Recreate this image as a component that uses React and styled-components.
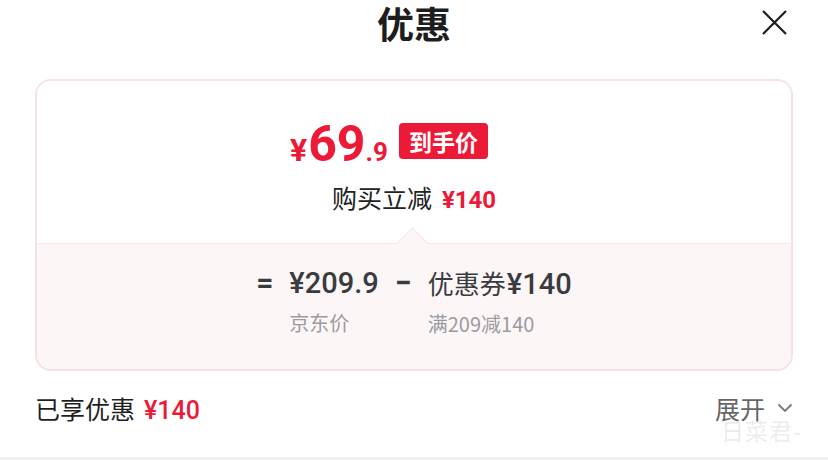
import styled, { createGlobalStyle } from 'styled-components';

const GlobalStyle = createGlobalStyle`
  html, body {
    margin: 0;
    padding: 0;
    background: #fff;
  }
  body {
    font-family: Roboto, "Noto Sans", "Noto Sans CJK SC", sans-serif;
  }
`;

const RED = '#ec1a37';
const CJK = '"Noto Sans CJK SC", sans-serif';
const NUM = 'Roboto, "Noto Sans CJK SC", sans-serif';

const Sheet = styled.div`
  position: relative;
  width: 828px;
  height: 460px;
  overflow: hidden;
  background: #fff;
  border-bottom: 3px solid #f0f0f0;
  box-sizing: border-box;
`;

const Header = styled.div`
  position: relative;
  display: flex;
  justify-content: center;
  align-items: center;
  height: 46px;
`;

const Title = styled.h1`
  margin: 0;
  font-family: ${CJK};
  font-size: 37px;
  font-weight: 700;
  color: #1d1d1d;
  line-height: 1.2;
`;

const Close = styled.button`
  position: absolute;
  right: 40px;
  top: 8px;
  width: 28px;
  height: 28px;
  padding: 0;
  border: none;
  background: none;
  display: flex;
  align-items: center;
  justify-content: center;
`;

const Card = styled.div`
  margin: 33px 35px 0;
  border: 2px solid #f8e1e6;
  border-radius: 16px;
  overflow: hidden;
  height: 292px;
  box-sizing: border-box;
  display: flex;
  flex-direction: column;
`;

const Upper = styled.div`
  height: 162px;
  display: flex;
  flex-direction: column;
  align-items: center;
  padding-top: 40px;
  box-sizing: border-box;
  background: #fff;
`;

const PriceRow = styled.div`
  display: flex;
  align-items: center;
  gap: 11px;
  height: 46px;
  margin-right: 50px;
`;

const Price = styled.div`
  display: flex;
  align-items: baseline;
  color: ${RED};
  font-family: ${NUM};
  font-weight: 700;
  line-height: 1;
`;

const Unit = styled.span`
  font-size: ${(p) => p.size}px;
  margin-right: ${(p) => p.gap || 0}px;
`;

const Tag = styled.span`
  background: ${RED};
  color: #fff;
  font-family: ${CJK};
  font-size: 23px;
  font-weight: 700;
  padding: 0 10px;
  height: 36px;
  line-height: 36px;
  border-radius: 4px;
  margin-top: -6px;
`;

const Saving = styled.div`
  margin-top: 12px;
  display: flex;
  align-items: baseline;
  gap: 10px;
  font-family: ${CJK};
  font-size: 25px;
  color: #222;
`;

const RedNum = styled.span`
  color: ${RED};
  font-family: ${NUM};
  font-weight: ${(p) => (p.bold ? 700 : 500)};
  font-size: ${(p) => p.size || 24}px;
`;

const Lower = styled.div`
  position: relative;
  flex: 1;
  background: #fdf6f7;
  border-top: 1.5px solid #f8e6ea;
  display: flex;
  justify-content: center;
  padding-top: 19px;
  box-sizing: border-box;

  &::before {
    content: '';
    position: absolute;
    left: 364px;
    top: -12px;
    width: 22px;
    height: 22px;
    background: #fdf6f7;
    border-top: 1.5px solid #f8e6ea;
    border-left: 1.5px solid #f8e6ea;
    transform: rotate(45deg);
  }
`;

const Formula = styled.div`
  display: flex;
  align-items: flex-start;
  gap: 16px;
  color: #3a3b3f;
`;

const Op = styled.span`
  font-family: ${NUM};
  font-size: 30px;
  font-weight: 700;
  line-height: 40px;
  width: 17px;
  text-align: center;
`;

const Term = styled.div`
  display: flex;
  flex-direction: column;
  gap: 6px;
`;

const Amount = styled.span`
  font-family: ${NUM};
  font-size: 29px;
  font-weight: 500;
  line-height: 40px;
  color: #3a3b3f;
`;

const AmountLabel = styled.span`
  font-family: ${CJK};
  font-size: 26px;
  font-weight: 400;
  margin-right: 1px;
`;

const Hint = styled.span`
  font-family: ${CJK};
  font-size: 20px;
  line-height: 28px;
  color: #9a9ba1;
`;

const Footer = styled.div`
  display: flex;
  justify-content: space-between;
  align-items: center;
  padding: 0 35px;
  margin-top: 20px;
  height: 34px;
`;

const Enjoyed = styled.div`
  display: flex;
  align-items: baseline;
  gap: 9px;
  font-family: ${CJK};
  font-size: 25px;
  color: #1f1f1f;
`;

const Expand = styled.div`
  display: flex;
  align-items: center;
  gap: 12px;
  font-family: ${CJK};
  font-size: 25px;
  color: #666;
`;

const Watermark = styled.span`
  position: absolute;
  right: 26px;
  bottom: 10px;
  font-family: ${CJK};
  font-size: 23px;
  color: rgba(200, 200, 200, 0.35);
  letter-spacing: 1px;
`;

export default function App() {
  return (
    <>
      <GlobalStyle />
      <Sheet>
        <Header>
          <Title>优惠</Title>
          <Close aria-label="关闭">
            <svg width="27" height="27" viewBox="0 0 27 27">
              <path d="M2 2 L25 25 M25 2 L2 25" stroke="#1d1d1d" strokeWidth="2.2" fill="none" />
            </svg>
          </Close>
        </Header>

        <Card>
          <Upper>
            <PriceRow>
              <Price>
                <Unit size={32} gap={1}>¥</Unit>
                <Unit size={50}>69</Unit>
                <Unit size={26}>.9</Unit>
              </Price>
              <Tag>到手价</Tag>
            </PriceRow>
            <Saving>
              <span>购买立减</span>
              <RedNum bold>¥140</RedNum>
            </Saving>
          </Upper>

          <Lower>
            <Formula>
              <Op>=</Op>
              <Term>
                <Amount>¥209.9</Amount>
                <Hint>京东价</Hint>
              </Term>
              <Op>−</Op>
              <Term>
                <Amount>
                  <AmountLabel>优惠券</AmountLabel>¥140
                </Amount>
                <Hint>满209减140</Hint>
              </Term>
            </Formula>
          </Lower>
        </Card>

        <Footer>
          <Enjoyed>
            <span>已享优惠</span>
            <RedNum size={25}>¥140</RedNum>
          </Enjoyed>
          <Expand>
            <span>展开</span>
            <svg width="16" height="10" viewBox="0 0 16 10">
              <path d="M1.5 1.5 L8 8 L14.5 1.5" stroke="#777" strokeWidth="1.8" fill="none" />
            </svg>
          </Expand>
        </Footer>
        <Watermark>日菜君-</Watermark>
      </Sheet>
    </>
  );
}
